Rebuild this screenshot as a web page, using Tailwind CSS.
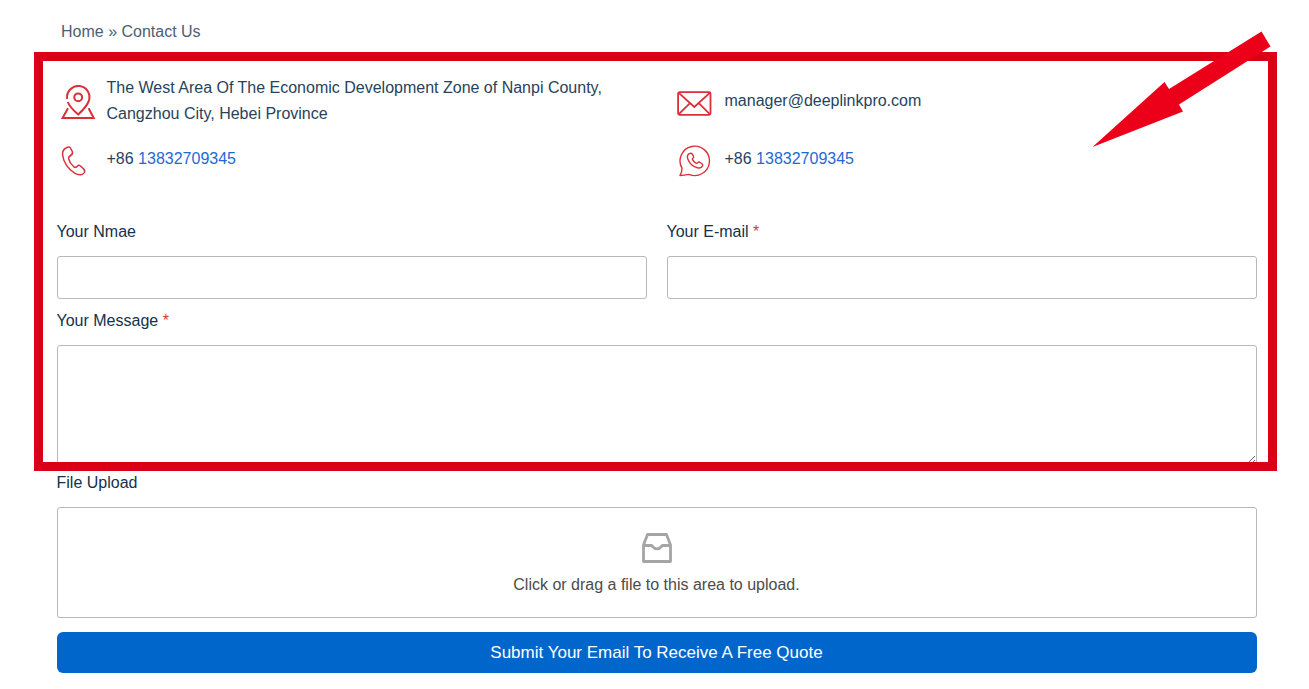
<!DOCTYPE html>
<html lang="en">
<head>
<meta charset="utf-8">
<title>Contact Us</title>
<script src="https://cdn.jsdelivr.net/npm/@tailwindcss/browser@4"></script>
</head>
<body class="relative h-[689px] overflow-hidden bg-white font-['Liberation_Sans',Arial,sans-serif] text-base text-[#27435c]">
<main class="ml-[57px] w-[1200px] pt-5">
  <nav class="pl-1 leading-6 text-[#4b6074]">Home » Contact Us</nav>

  <section class="mt-[31px] grid h-[97px] grid-cols-[618px_1fr] grid-rows-[52px_26px] gap-y-[19px] leading-[26px]">
    <div class="flex items-center gap-[10.5px] pl-1">
      <svg class="mt-[2px] h-[36px] w-[35px] shrink-0" viewBox="0 0 35 36" fill="none" stroke="#d9303a" stroke-width="2">
        <path d="M6.200 15A11.200 11.200 0 1 1 27.600 17.500C25.500 22.500 21.500 26.500 17.200 30.500C12.500 26.500 8.500 22.500 6.800 18"/>
        <circle cx="17.200" cy="13.300" r="3.900"/>
        <path d="M7 24.200L1.500 34H32.700L27.600 24.200"/>
      </svg>
      <p class="w-[510px]">The West Area Of The Economic Development Zone of Nanpi County, Cangzhou City, Hebei Province</p>
    </div>
    <div class="flex items-center gap-[12.5px] pl-[2px]">
      <svg class="mt-[6px] h-[26px] w-[35px]" viewBox="0 0 35 26" fill="none" stroke="#d9303a" stroke-width="1.800">
        <rect x="1.100" y="1.200" width="32.400" height="22.600" rx="1.500"/>
        <path d="M1.800 1.800L17.300 16L32.800 1.800M1.800 23.200L13 12.200M32.800 23.200L21.800 12.200"/>
      </svg>
      <span>manager@deeplinkpro.com</span>
    </div>
    <div class="flex items-center gap-[19.5px] pl-1">
      <svg class="mt-[4px] h-[30px] w-[26px]" viewBox="0 0 26 30" fill="none" stroke="#d9303a" stroke-width="1.500" stroke-linejoin="round">
        <path d="M5 2C2.300 3.300 1.300 6 1.600 9C2.300 16 7.200 23.500 14 27.300C18 29.500 22 29 23.400 26.500C24.300 24.800 23.500 23.500 22 22.300L19.500 20C18.300 19 17.200 19.200 16.300 20.200C15.300 21.400 14 21.800 12.800 20.800C10 18.300 8.300 15.500 7.600 12.700C7.300 11.300 7.900 10.700 9 10C11.500 8.500 12.200 7.500 11.300 5.500L9.800 2.500C8.800 .6 7 .8 5 2Z"/>
      </svg>
      <span>+86 <a class="text-[#1f69d2]">13832709345</a></span>
    </div>
    <div class="flex items-center gap-[14px] pl-[3.5px]">
      <svg class="mt-[4px] h-[32px] w-[32px]" viewBox="0 0 32 32" fill="none" stroke="#d9303a" stroke-width="1.400" stroke-linejoin="round">
        <path d="M3 23.200A14.700 14.700 0 1 1 10 29.400C7.200 30 3.800 30.500 1 30.500C2.300 28.500 3 26 3 23.200Z"/>
        <path d="M10.300 8.700C8.500 9.800 8 11.600 8.700 13.700C10.200 18 14 21.600 18.500 22.800C21 23.400 22.800 22.600 23.600 20.800C24 20 23.600 19.300 22.900 18.700L20.800 17.200C20 16.700 19.300 16.900 18.700 17.600C18 18.500 17.200 18.500 16.200 17.700C15 16.900 14.200 15.800 13.600 14.700C13.200 14 13.300 13.500 14 13.100C14.800 12.600 14.900 12 14.500 11.200L13.300 9.200C12.600 8.100 11.500 8 10.300 8.700Z"/>
      </svg>
      <span>+86 <a class="text-[#1f69d2]">13832709345</a></span>
    </div>
  </section>

  <form class="mt-12 text-[#12324d]">
    <div class="grid grid-cols-2 gap-5">
      <label class="block indent-[-0.5px] leading-6">Your Nmae
        <input class="mt-3 block h-[43px] w-full rounded-[3px] border border-[#b8b8b8] bg-white px-3 outline-none">
      </label>
      <label class="block indent-[-0.5px] leading-6">Your E-mail <span class="text-[#d63637]">*</span>
        <input class="mt-3 block h-[43px] w-full rounded-[3px] border border-[#b8b8b8] bg-white px-3 outline-none">
      </label>
    </div>
    <label class="mt-[10px] block indent-[-0.5px] leading-6">Your Message <span class="text-[#d63637]">*</span>
      <textarea class="mt-3 block h-[120px] w-full resize-y rounded-[3px] border border-[#b8b8b8] bg-white px-3 outline-none"></textarea>
    </label>
    <div class="mt-[6px] indent-[-0.5px] leading-6">File Upload</div>
    <div class="mt-3 flex h-[111px] flex-col items-center rounded-[3px] border border-[#b8b8b8] pt-[25px] text-[#4c4c4c]">
      <svg class="h-[30px] w-[30px]" viewBox="0 0 30 30" fill="none" stroke="#a5a5a5" stroke-width="2.800" stroke-linejoin="round">
        <path d="M1.500 12L5.500 1.500H24.500L28.500 12V28.500H1.500ZM1.500 12.500H9.500C10.500 12.500 11 15.800 15 15.800S19.500 12.500 20.500 12.500H28.500"/>
      </svg>
      <span class="mt-[10px] pr-px leading-6">Click or drag a file to this area to upload.</span>
    </div>
    <button type="button" class="mt-[14px] block h-[41px] w-full rounded-md bg-[#0066cc] pr-px text-[17px] text-white">Submit Your Email To Receive A Free Quote</button>
  </form>
</main>

<!-- highlight frame and pointer over the form -->
<div class="pointer-events-none absolute top-[52px] left-[34px] h-[419px] w-[1243px] border-[9px] border-[#d90018]"></div>
<svg class="pointer-events-none absolute top-0 left-0" width="1309" height="689" viewBox="0 0 1309 689">
  <path fill="#ec0019" d="M1092.500 147L1164.500 82L1169 89L1261.500 31.500L1270.500 46.500L1179 104.500L1183 111.500Z"/>
</svg>
</body>
</html>
